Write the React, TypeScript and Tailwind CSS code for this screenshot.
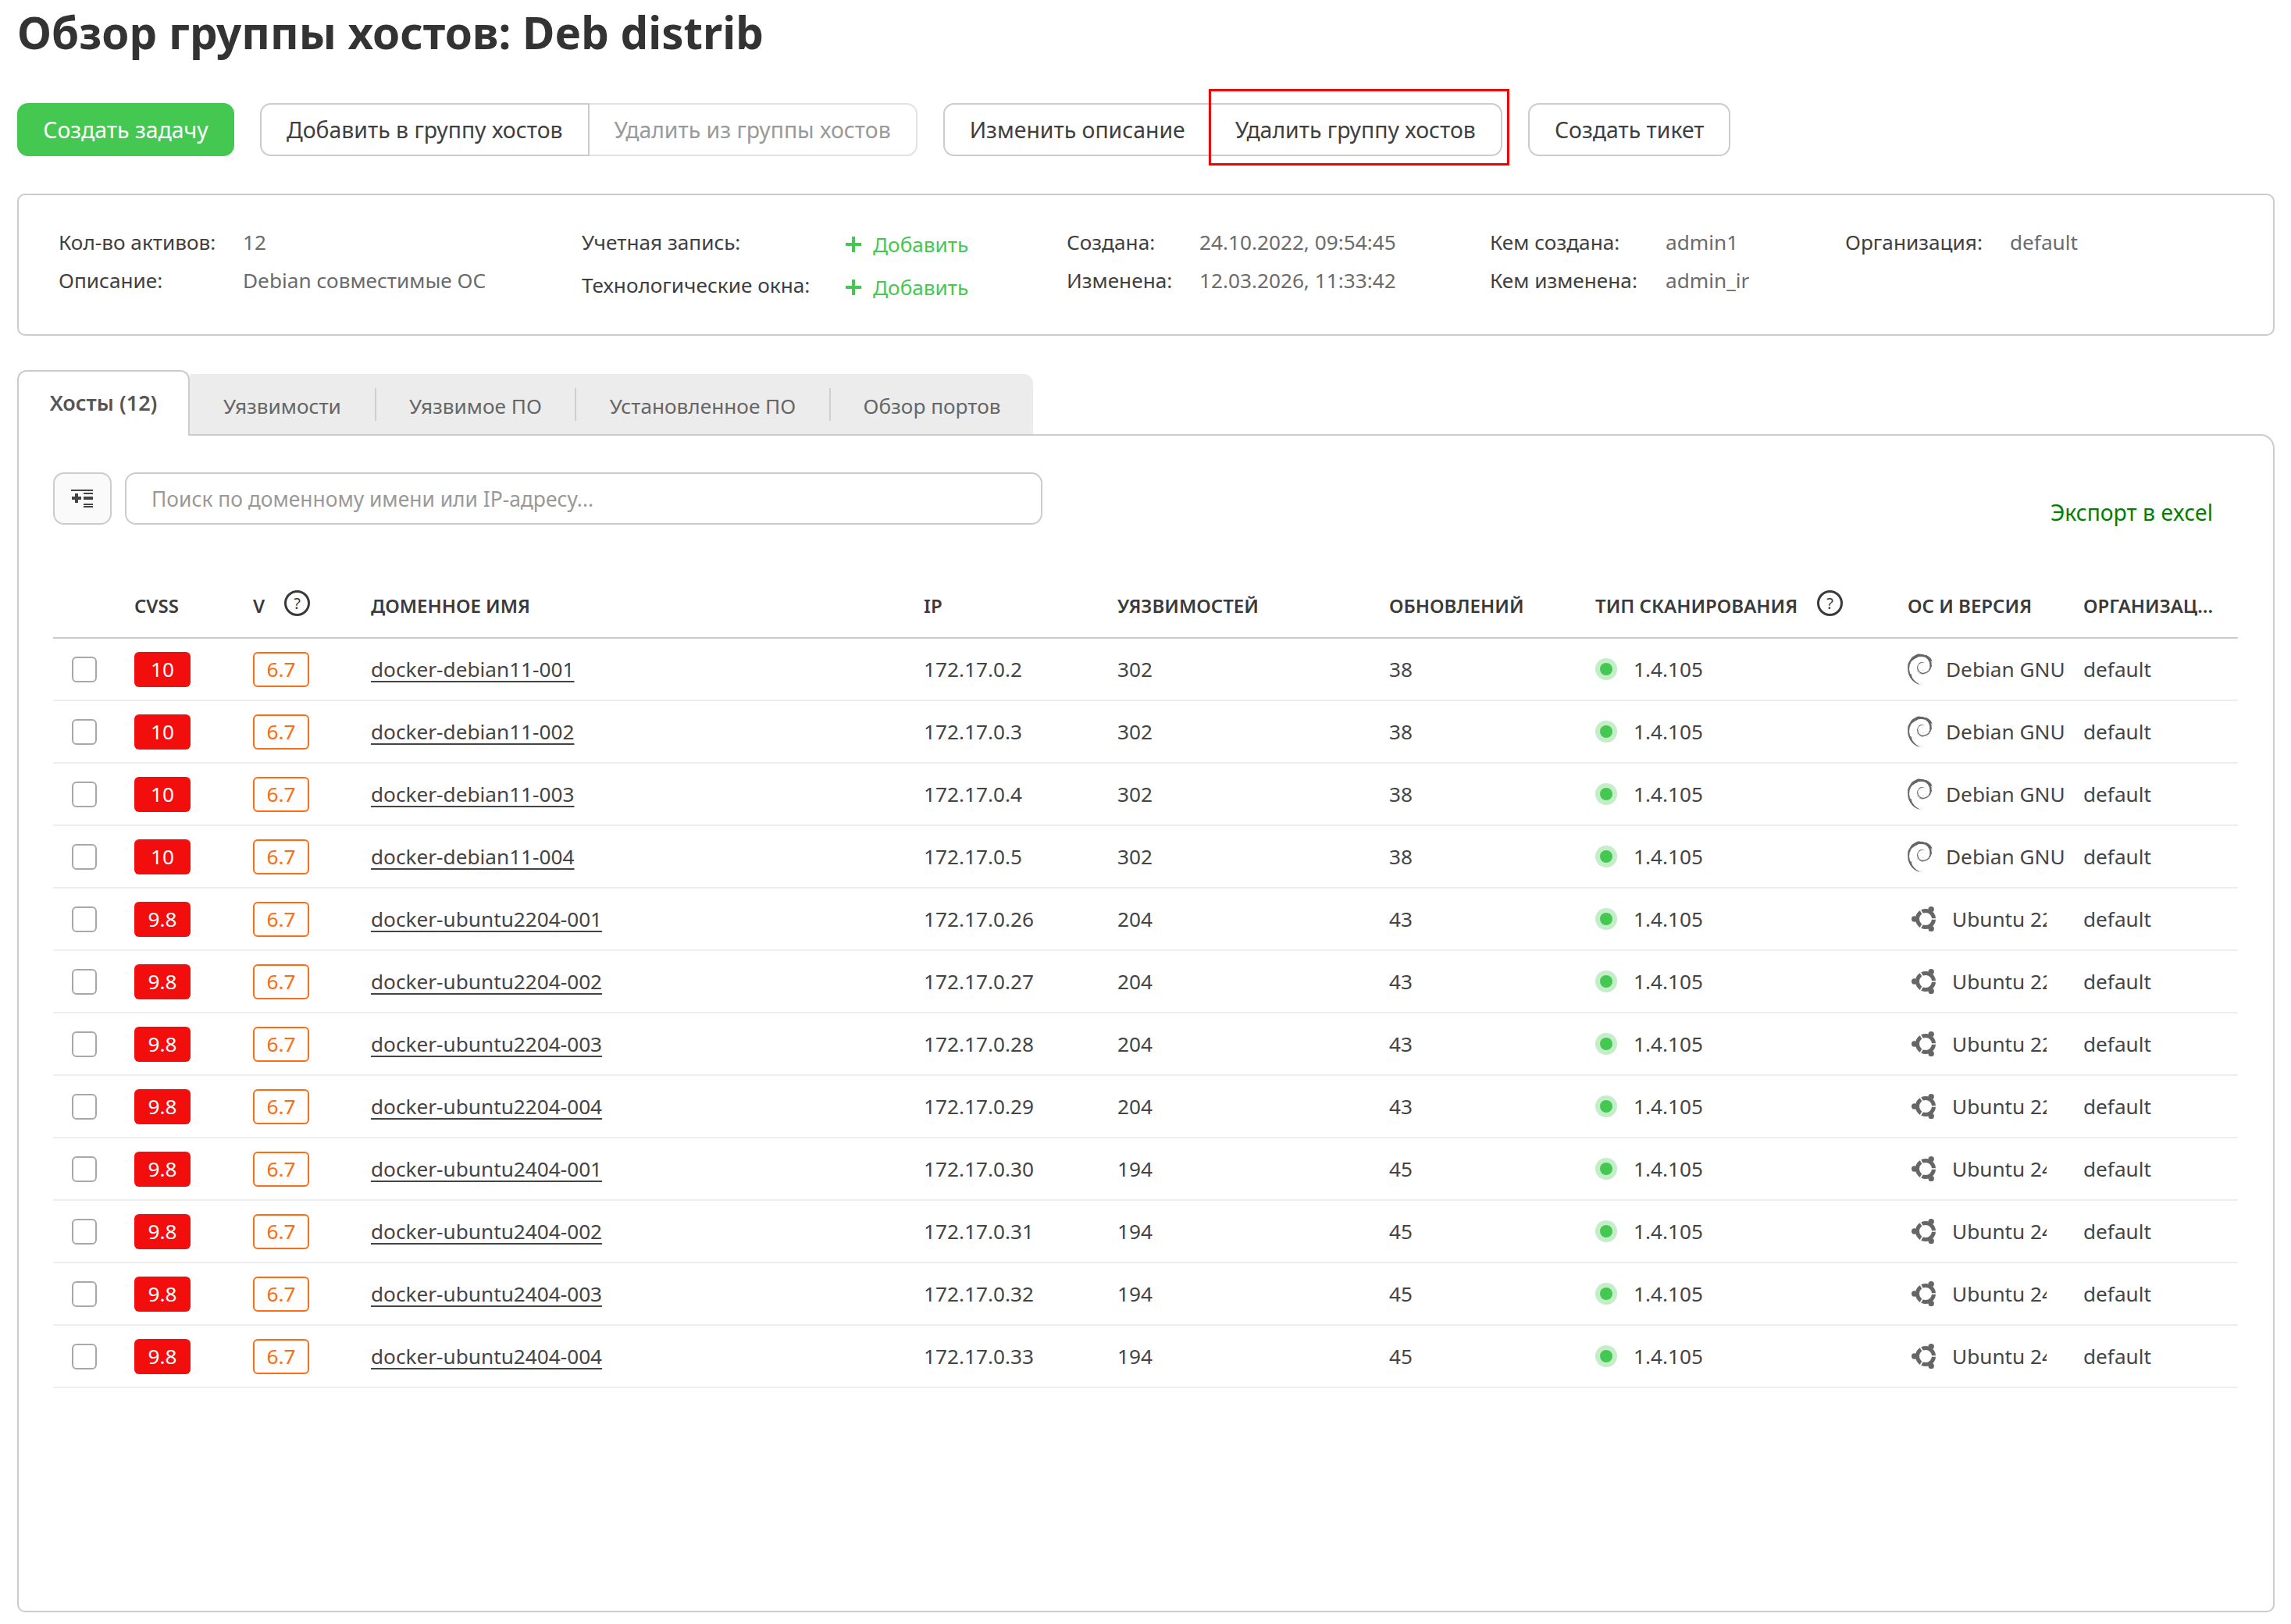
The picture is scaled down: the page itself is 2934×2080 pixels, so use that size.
import { SiDebian } from "react-icons/si";

const hosts: [string, string, string, string, string, string, string][] = [
  ["10", "docker-debian11-001", "172.17.0.2", "302", "38", "d", "Debian GNU/Linux 11"],
  ["10", "docker-debian11-002", "172.17.0.3", "302", "38", "d", "Debian GNU/Linux 11"],
  ["10", "docker-debian11-003", "172.17.0.4", "302", "38", "d", "Debian GNU/Linux 11"],
  ["10", "docker-debian11-004", "172.17.0.5", "302", "38", "d", "Debian GNU/Linux 11"],
  ["9.8", "docker-ubuntu2204-001", "172.17.0.26", "204", "43", "u", "Ubuntu 22.04"],
  ["9.8", "docker-ubuntu2204-002", "172.17.0.27", "204", "43", "u", "Ubuntu 22.04"],
  ["9.8", "docker-ubuntu2204-003", "172.17.0.28", "204", "43", "u", "Ubuntu 22.04"],
  ["9.8", "docker-ubuntu2204-004", "172.17.0.29", "204", "43", "u", "Ubuntu 22.04"],
  ["9.8", "docker-ubuntu2404-001", "172.17.0.30", "194", "45", "u", "Ubuntu 24.04"],
  ["9.8", "docker-ubuntu2404-002", "172.17.0.31", "194", "45", "u", "Ubuntu 24.04"],
  ["9.8", "docker-ubuntu2404-003", "172.17.0.32", "194", "45", "u", "Ubuntu 24.04"],
  ["9.8", "docker-ubuntu2404-004", "172.17.0.33", "194", "45", "u", "Ubuntu 24.04"],
];

const cols = "grid grid-cols-[104px_152px_151px_708px_248px_348px_264px_400px_225px_198px]";

function Help() {
  return (
    <span className="flex h-[33px] w-[33px] shrink-0 -translate-y-[3px] items-center justify-center rounded-full border-[3px] border-[#3a3a3a] text-[20px] font-normal leading-none text-[#3a3a3a]">
      ?
    </span>
  );
}

function UbuntuIcon() {
  return (
    <svg width="36" height="36" viewBox="0 0 36 36" className="ml-[5px] shrink-0" fill="none">
      <circle cx="18" cy="18" r="10.5" stroke="#666" strokeWidth="5" />
      <g stroke="#fff" strokeWidth="1.6">
        <path d="M18 18L33 18" />
        <path d="M18 18L10.5 5" />
        <path d="M18 18L10.5 31" />
      </g>
      <circle cx="3.7" cy="18" r="3.7" fill="#666" />
      <circle cx="25.2" cy="5.6" r="3.7" fill="#666" />
      <circle cx="25.2" cy="30.4" r="3.7" fill="#666" />
    </svg>
  );
}

function Row({ h }: { h: (typeof hosts)[number] }) {
  return (
    <div className={`${cols} h-[80px] items-center border-b-2 border-[#eeeeee] text-[#444444]`}>
      <div className="pl-[24px]">
        <div className="h-[33px] w-[32px] rounded-[6px] border-2 border-[#a8a8a8] bg-white" />
      </div>
      <div>
        <div className="flex h-[45px] w-[72px] items-center justify-center rounded-[6px] bg-[#f30e0e] text-white">{h[0]}</div>
      </div>
      <div>
        <div className="flex h-[45px] w-[72px] items-center justify-center rounded-[6px] border-2 border-[#ff6a13] text-[#ff6a13]">6.7</div>
      </div>
      <div><span className="underline decoration-2 underline-offset-[5px]">{h[1]}</span></div>
      <div>{h[2]}</div>
      <div>{h[3]}</div>
      <div>{h[4]}</div>
      <div className="flex items-center gap-[21px]">
        <span className="flex h-[28px] w-[28px] items-center justify-center rounded-full bg-[#c3eec8]">
          <span className="h-[16px] w-[16px] rounded-full bg-[#44c851]" />
        </span>
        1.4.105
      </div>
      <div className="flex items-center">
        {h[5] === "d" ? (
          <>
            <SiDebian className="ml-[-4px] shrink-0 text-[#666666]" size={40} />
            <span className="ml-[13px] w-[152px] overflow-hidden whitespace-nowrap">{h[6]}</span>
          </>
        ) : (
          <>
            <UbuntuIcon />
            <span className="ml-[16px] w-[121px] overflow-hidden whitespace-nowrap">{h[6]}</span>
          </>
        )}
      </div>
      <div>default</div>
    </div>
  );
}

function Add() {
  return (
    <span className="flex items-center text-[#44c851]">
      <svg width="22" height="22" viewBox="0 0 22 22" className="mr-[14px]"><path d="M11 1v20M1 11h20" stroke="#44c851" strokeWidth="4" /></svg>
      Добавить
    </span>
  );
}

function Info({ label, value }: { label: string; value: string }) {
  return (
    <>
      <div className="text-[#3f3f3f]">{label}</div>
      <div className="text-[#6b6b6b]">{value}</div>
    </>
  );
}

export default function App() {
  return (
    <div className="bg-white pl-[22px] pr-[21px] pb-[17px] font-['Noto_Sans','Open_Sans',sans-serif] text-[26.2px] text-[#3f3f3f]">
      <h1 className="mb-[44px] h-[88px] text-[56.5px] font-bold leading-[84px] text-[#333333]">Обзор группы хостов: Deb distrib</h1>

      <div className="mb-[48px] flex h-[68px] text-[28.4px]">
        <div className="flex w-[278px] items-center justify-center rounded-[14px] bg-[#44c851] text-white">Создать задачу</div>
        <div className="ml-[33px] flex">
          <div className="flex items-center rounded-l-[14px] border-2 border-[#cccccc] px-[32px]">Добавить в группу хостов</div>
          <div className="flex items-center rounded-r-[14px] border-2 border-l-0 border-[#e2e2e2] px-[32px] text-[#9a9a9a]">Удалить из группы хостов</div>
        </div>
        <div className="relative ml-[33px] flex rounded-[14px] border-2 border-[#cccccc]">
          <div className="flex items-center px-[32px]">Изменить описание</div>
          <div className="relative flex items-center px-[32px]">
            Удалить группу хостов
            <div className="absolute -bottom-[14px] -left-[2px] -right-[11px] -top-[20px] border-[3px] border-[#f00000]" />
          </div>
        </div>
        <div className="ml-[33px] flex items-center rounded-[14px] border-2 border-[#cccccc] px-[32px]">Создать тикет</div>
      </div>

      <div className="mb-[44px] flex h-[182px] rounded-[10px] border-2 border-[#cccccc] pl-[51px] pt-[36px]">
        <div className="grid w-[670px] grid-cols-[236px_1fr] auto-rows-[49px] items-center">
          <Info label="Кол-во активов:" value="12" />
          <Info label="Описание:" value="Debian совместимые ОС" />
        </div>
        <div className="grid w-[621px] grid-cols-[337px_1fr] auto-rows-[55px] items-center">
          <div className="pb-[6px]">Учетная запись:</div>
          <Add />
          <div className="pb-[6px]">Технологические окна:</div>
          <Add />
        </div>
        <div className="grid w-[542px] grid-cols-[170px_1fr] auto-rows-[49px] items-center">
          <Info label="Создана:" value="24.10.2022, 09:54:45" />
          <Info label="Изменена:" value="12.03.2026, 11:33:42" />
        </div>
        <div className="grid w-[455px] grid-cols-[225px_1fr] auto-rows-[49px] items-center">
          <Info label="Кем создана:" value="admin1" />
          <Info label="Кем изменена:" value="admin_ir" />
        </div>
        <div className="grid grid-cols-[211px_1fr] auto-rows-[49px] items-start">
          <div className="flex h-[49px] items-center">Организация:</div>
          <div className="flex h-[49px] items-center text-[#6b6b6b]">default</div>
        </div>
      </div>

      <div className="relative z-10 -mb-[2px] flex h-[84px] items-end">
        <div className="flex h-[84px] w-[221px] items-start justify-center rounded-t-[12px] border-2 border-b-0 border-[#cccccc] bg-white pt-[20px] text-[27px] font-semibold text-[#555555]">Хосты (12)</div>
        <div className="flex h-[79px] items-center rounded-tr-[12px] border-b-2 border-[#cccccc] bg-[#ececec] text-[#666666]">
          <div className="flex h-[42px] w-[239px] items-center justify-center border-r-2 border-[#cfcfcf] pt-[6px]">Уязвимости</div>
          <div className="flex h-[42px] w-[256px] items-center justify-center border-r-2 border-[#cfcfcf] pt-[6px]">Уязвимое ПО</div>
          <div className="flex h-[42px] w-[326px] items-center justify-center border-r-2 border-[#cfcfcf] pt-[6px]">Установленное ПО</div>
          <div className="flex h-[42px] w-[259px] items-center justify-center pt-[6px]">Обзор портов</div>
        </div>
      </div>

      <div className="h-[1509px] rounded-b-[10px] rounded-tr-[18px] border-2 border-[#cccccc] pl-[44px] pr-[45px] pt-[47px]">
        <div className="flex items-start">
          <div className="flex h-[67px] w-[75px] items-center justify-center rounded-[14px] border-2 border-[#cccccc] bg-[#fafafa]">
            <svg width="30" height="24" viewBox="0 0 30 24" fill="#444444">
              <rect x="0" y="0" width="28" height="2" />
              <rect x="16" y="4" width="12" height="2" />
              <rect x="16" y="9" width="12" height="4" />
              <rect x="16" y="18" width="12" height="2" />
              <rect x="16" y="21" width="12" height="2" />
              <rect x="5" y="5" width="4" height="12" />
              <rect x="1" y="9" width="12" height="4" />
            </svg>
          </div>
          <input
            className="ml-[17px] h-[67px] w-[1175px] rounded-[14px] border-2 border-[#cccccc] pl-[32px] text-[26.4px] outline-none placeholder:text-[#999999]"
            placeholder="Поиск по доменному имени или IP-адресу..."
          />
          <div className="ml-auto mr-[32px] mt-[30px] text-[28.3px] text-[#008000]">Экспорт в excel</div>
        </div>

        <div className={`${cols} mt-[78px] h-[63px] items-center border-b-2 border-[#cccccc] pb-[20px] text-[24px] font-semibold uppercase text-[#3a3a3a]`}>
          <div />
          <div>CVSS</div>
          <div className="flex items-center gap-[25px]">V <Help /></div>
          <div>Доменное имя</div>
          <div>IP</div>
          <div>Уязвимостей</div>
          <div>Обновлений</div>
          <div className="flex items-center gap-[25px] whitespace-nowrap">Тип сканирования <Help /></div>
          <div>ОС и версия</div>
          <div className="overflow-hidden text-ellipsis whitespace-nowrap pr-[30px]">Организация</div>
        </div>

        {hosts.map((h) => (
          <Row key={h[1]} h={h} />
        ))}
      </div>
    </div>
  );
}
